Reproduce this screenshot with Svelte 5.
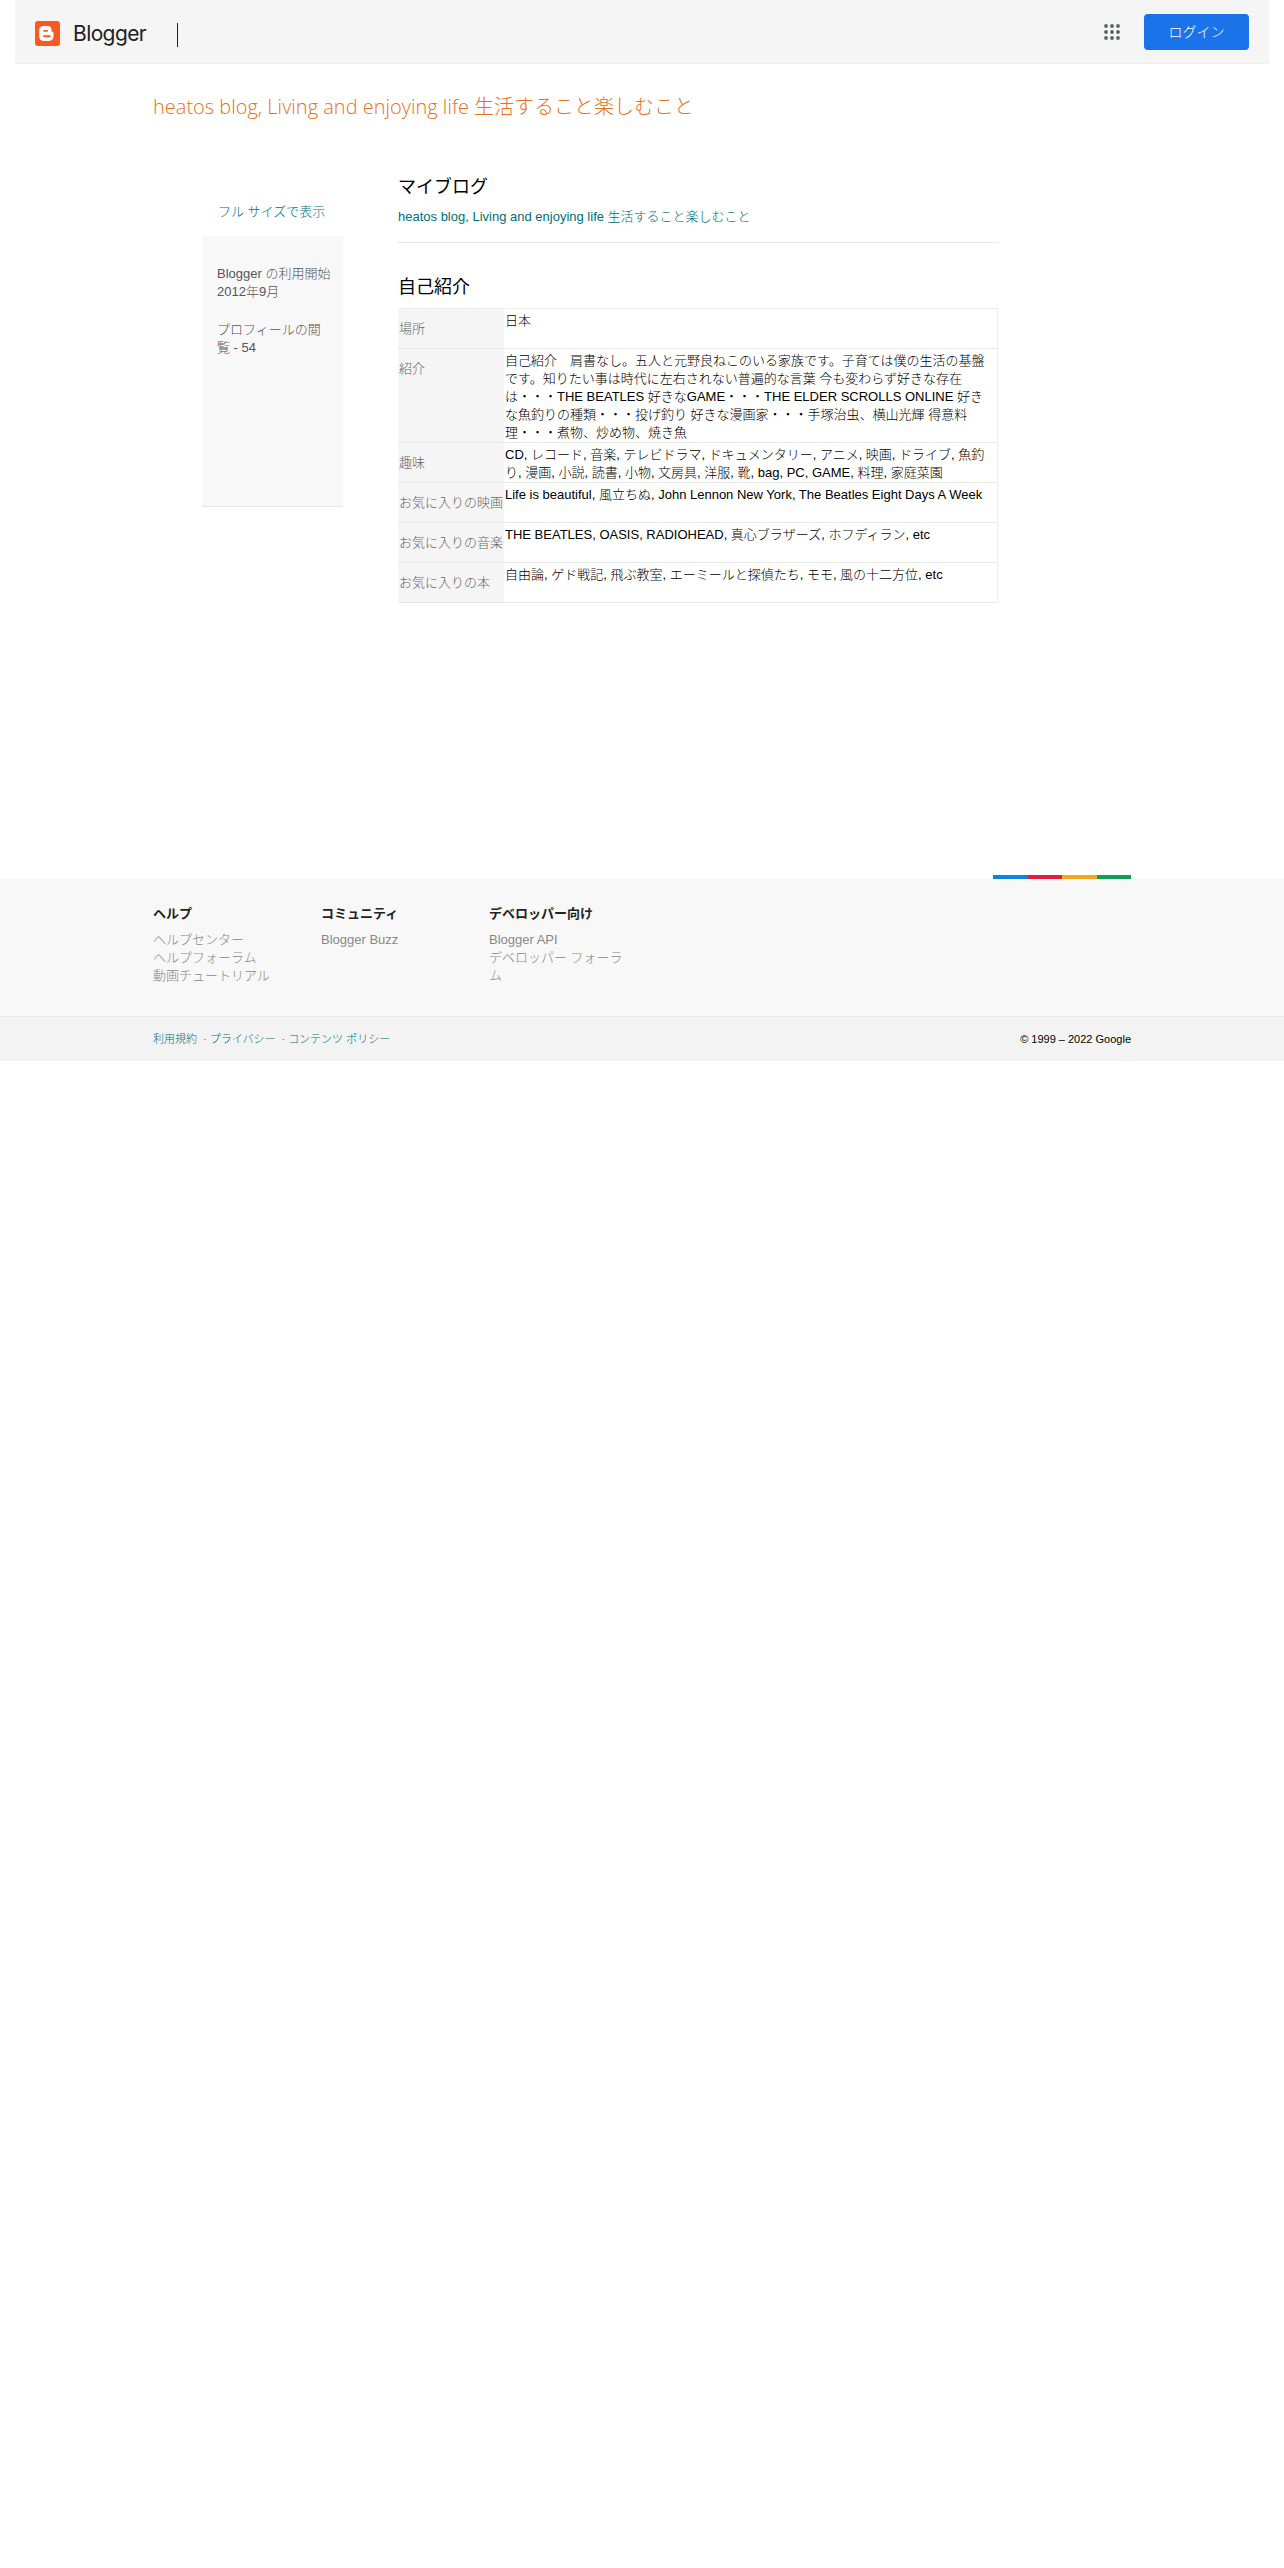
<script>
	const profile = [
		{ label: '場所', value: '日本' },
		{
			label: '紹介',
			value:
				'自己紹介　肩書なし。五人と元野良ねこのいる家族です。子育ては僕の生活の基盤です。知りたい事は時代に左右されない普遍的な言葉 今も変わらず好きな存在は・・・THE BEATLES 好きなGAME・・・THE ELDER SCROLLS ONLINE 好きな魚釣りの種類・・・投げ釣り 好きな漫画家・・・手塚治虫、横山光輝 得意料理・・・煮物、炒め物、焼き魚'
		},
		{
			label: '趣味',
			value:
				'CD, レコード, 音楽, テレビドラマ, ドキュメンタリー, アニメ, 映画, ドライブ, 魚釣り, 漫画, 小説, 読書, 小物, 文房具, 洋服, 靴, bag, PC, GAME, 料理, 家庭菜園'
		},
		{ label: 'お気に入りの映画', value: 'Life is beautiful, 風立ちぬ, John Lennon New York, The Beatles Eight Days A Week' },
		{ label: 'お気に入りの音楽', value: 'THE BEATLES, OASIS, RADIOHEAD, 真心ブラザーズ, ホフディラン, etc' },
		{ label: 'お気に入りの本', value: '自由論, ゲド戦記, 飛ぶ教室, エーミールと探偵たち, モモ, 風の十二方位, etc' }
	];

	const footerCols = [
		{ title: 'ヘルプ', links: ['ヘルプセンター', 'ヘルプフォーラム', '動画チュートリアル'] },
		{ title: 'コミュニティ', links: ['Blogger Buzz'] },
		{ title: 'デベロッパー向け', links: ['Blogger API', 'デベロッパー フォーラム'] }
	];
</script>

<div class="page">
	<header class="topbar">
		<div class="brand">
			<svg class="logo" viewBox="0 0 25 25" width="25" height="25" aria-hidden="true">
				<rect width="25" height="25" rx="3" fill="#ff5722" />
				<path
					fill="#fff"
					fill-rule="evenodd"
					d="M8.500 5h4.200c2.400 0 3.900 1.500 3.900 3.700v1.100c0 .7.400 1 .9 1.100.6.100 1 .5 1 1.100v3.300c0 2.700-1.900 4.600-4.500 4.600H8.500c-2.500 0-4.300-1.900-4.300-4.400V9.300C4.200 6.800 6 5 8.500 5zm.6 3.900c-.6 0-1 .4-1 .9s.4 1 1 1h3c.6 0 1-.4 1-1s-.4-.9-1-.9zm0 5.400c-.6 0-1 .4-1 1s.4 1 1 1h5.500c.6 0 1-.4 1-1s-.4-1-1-1z"
				/>
			</svg>
			<span class="wordmark">Blogger</span>
			<span class="divider"></span>
		</div>
		<div class="actions">
			<svg class="apps" viewBox="0 0 16 16" width="16" height="16" aria-hidden="true">
				{#each [2, 8, 14] as y}
					{#each [2, 8, 14] as x}
						<circle cx={x} cy={y} r="1.900" fill="#5f6368" />
					{/each}
				{/each}
			</svg>
			<button type="button" class="login">ログイン</button>
		</div>
	</header>

	<h1 class="blog-title">heatos blog, Living and enjoying life 生活すること楽しむこと</h1>

	<main class="content">
		<aside class="side">
			<a class="full-size" href="#top">フル サイズで表示</a>
			<div class="side-card">
				<p>Blogger の利用開始<br />2012年9月</p>
				<p>プロフィールの閲覧 - 54</p>
			</div>
		</aside>

		<section class="main-col">
			<h2 class="blogs-head">マイブログ</h2>
			<a class="blog-link" href="#top">heatos blog, Living and enjoying life 生活すること楽しむこと</a>
			<hr />
			<h2 class="about-head">自己紹介</h2>
			<div class="table">
				{#each profile as row}
					<div class="row">
						<div class="label">{row.label}</div>
						<div class="value">{row.value}</div>
					</div>
				{/each}
			</div>
		</section>
	</main>

	<footer>
		<div class="stripe">
			<span class="blue"></span><span class="red"></span><span class="yellow"></span><span class="green"></span>
		</div>
		<div class="foot-top">
			<div class="foot-cols">
				{#each footerCols as col}
					<div class="foot-col">
						<h3>{col.title}</h3>
						{#each col.links as link}
							<a href="#top">{link}</a>
						{/each}
					</div>
				{/each}
			</div>
		</div>
		<div class="foot-bottom">
			<div class="legal">
				<a href="#top">利用規約</a><span class="dot">·</span><a href="#top">プライバシー</a><span class="dot">·</span><a href="#top">コンテンツ ポリシー</a>
			</div>
			<div class="copy">© 1999 – 2022 Google</div>
		</div>
	</footer>
</div>

<style>
	:global(body) {
		margin: 0;
		background: #fff;
		font-family: "Liberation Sans", Arial, "Noto Sans CJK JP", sans-serif;
		font-size: 13px;
		line-height: 18px;
		font-weight: 300;
		color: #111;
	}

	a {
		text-decoration: none;
	}

	.topbar {
		display: flex;
		justify-content: space-between;
		align-items: center;
		height: 63px;
		margin: 0 15px;
		padding: 0 20px;
		background: #f5f5f5;
		border-bottom: 1px solid #eee;
	}

	.brand {
		display: flex;
		align-items: center;
		margin-top: 4px;
	}

	.logo {
		flex: none;
	}

	.wordmark {
		margin-left: 13px;
		width: 104px;
		font-family: Inter, Roboto, sans-serif;
		font-size: 21px;
		font-weight: 400;
		line-height: 26px;
		letter-spacing: -0.6px;
		color: #202124;
	}

	.divider {
		width: 1px;
		height: 24px;
		margin-top: 3px;
		background: #202124;
	}

	.actions {
		display: flex;
		align-items: center;
		gap: 24px;
	}

	.login {
		width: 105px;
		height: 36px;
		border: 0;
		border-radius: 4px;
		background: #1a73e8;
		color: #fff;
		font: inherit;
		font-size: 14px;
	}

	.blog-title {
		margin: 28px 153px 0;
		font-family: "Open Sans", "Noto Sans CJK JP", sans-serif;
		font-weight: 300;
		font-size: 20px;
		line-height: 30px;
		color: #e8711a;
	}

	.content {
		display: flex;
		height: 757px;
		padding-left: 202px;
	}

	.side {
		flex: none;
		width: 141px;
		padding-top: 81px;
	}

	.full-size {
		display: block;
		padding-left: 16px;
		color: #006f75;
	}

	.side-card {
		box-sizing: border-box;
		height: 271px;
		margin-top: 15px;
		padding: 29px 10px 0 15px;
		background: #f8f8f8;
		border-bottom: 1px solid #e4e4e4;
		color: #555;
	}

	.side-card p {
		margin: 0 0 20px;
	}

	.main-col {
		flex: none;
		width: 600px;
		margin-left: 55px;
		padding-top: 52px;
	}

	.blogs-head,
	.about-head {
		margin: 0;
		font-size: 18px;
		line-height: 26px;
		font-weight: 400;
		color: #000;
	}

	.blog-link {
		display: block;
		margin-top: 8px;
		color: #006f75;
	}

	hr {
		margin: 16px 0 0;
		border: 0;
		border-top: 1px solid #e4e4e4;
	}

	.about-head {
		margin-top: 31px;
	}

	.table {
		margin-top: 8px;
		border-right: 1px solid #eee;
		border-top: 1px solid #eee;
	}

	.row {
		display: flex;
		min-height: 39px;
		border-bottom: 1px solid #e8e8e8;
	}

	.label {
		flex: none;
		width: 106px;
		padding: 11px 0 0 1px;
		box-sizing: border-box;
		background: #f5f5f5;
		color: #666;
		white-space: nowrap;
	}

	.value {
		flex: 1;
		padding: 3px 8px 0 1px;
		color: #000;
	}

	footer {
		position: relative;
	}

	.stripe {
		position: absolute;
		top: -4px;
		left: 993px;
		display: flex;
		width: 138px;
		height: 4px;
	}

	.stripe span {
		flex: 1;
	}

	.blue { background: #0d83e6; }
	.red { background: #e21c3c; }
	.yellow { background: #f2a81e; }
	.green { background: #0f9d58; }

	.foot-top {
		box-sizing: border-box;
		height: 138px;
		padding: 26px 153px 0;
		background: #f8f8f8;
		border-bottom: 1px solid #ececec;
	}

	.foot-cols {
		display: flex;
	}

	.foot-col {
		flex: none;
		width: 168px;
	}

	.foot-col h3 {
		margin: 0 0 8px;
		font-size: 13px;
		line-height: 18px;
		font-weight: 700;
		color: #222;
	}

	.foot-col a {
		display: block;
		width: 135px;
		color: #888;
	}

	.foot-bottom {
		display: flex;
		justify-content: space-between;
		align-items: center;
		height: 44px;
		padding: 0 153px;
		background: #f3f3f3;
		font-size: 11px;
	}

	.legal a {
		color: #006f75;
	}

	.dot {
		margin: 0 3px 0 6px;
		color: #666;
	}

	.copy {
		color: #000;
	}
</style>
